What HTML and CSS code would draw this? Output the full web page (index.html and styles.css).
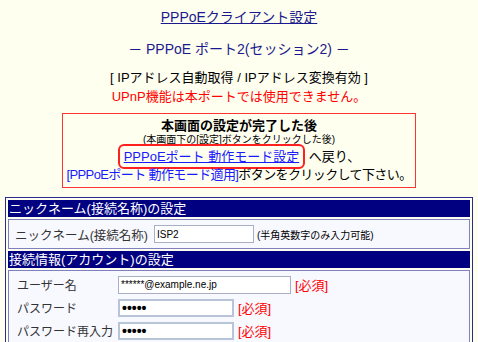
FILE: index.html
```html
<!DOCTYPE html>
<html lang="ja">
<head>
  <meta charset="UTF-8" />
  <title>PPPoEクライアント設定</title>
  <link rel="stylesheet" href="styles.css">
</head>
<body>
  <div class="title"><a href="#">PPPoEクライアント設定</a></div>
  <div class="port">－ PPPoE ポート2(セッション2) －</div>
  <div class="mode">
    <div>[ IPアドレス自動取得 / IPアドレス変換有効 ]</div>
    <div class="warn">UPnP機能は本ポートでは使用できません。</div>
  </div>

  <div class="notice">
    <div class="notice-head">本画面の設定が完了した後</div>
    <div class="notice-sub">(本画面下の[設定]ボタンをクリックした後)</div>
    <div class="notice-link"><span class="mark"><a href="#">PPPoEポート 動作モード設定</a></span> へ戻り、</div>
    <div class="notice-last"><span class="blue">[PPPoEポート 動作モード適用]</span>ボタンをクリックして下さい。</div>
  </div>

  <table class="form">
    <tr><th>ニックネーム(接続名称)の設定</th></tr>
    <tr>
      <td>
        <div class="nick">
          <span class="nick-label">ニックネーム(接続名称)</span>
          <input type="text" class="in-nick" value="ISP2">
          <span class="hint">(半角英数字のみ入力可能)</span>
        </div>
      </td>
    </tr>
    <tr><th>接続情報(アカウント)の設定</th></tr>
    <tr>
      <td class="account">
        <div class="field">
          <span class="label">ユーザー名</span>
          <input type="text" class="in-user" value="******@example.ne.jp">
          <span class="req">[必須]</span>
        </div>
        <div class="field">
          <span class="label">パスワード</span>
          <input type="password" class="in-pass" value="*****">
          <span class="req">[必須]</span>
        </div>
        <div class="field">
          <span class="label">パスワード再入力</span>
          <input type="password" class="in-pass" value="*****">
          <span class="req">[必須]</span>
        </div>
      </td>
    </tr>
  </table>
</body>
</html>
```

FILE: styles.css
```css
body {
  font-family: "Liberation Sans", "Noto Sans CJK JP", sans-serif;
  font-size: 13px;
  background-color: #fffff0;
  color: #000;
  margin: 0 5px;
  padding: 0;
}
.title {
  text-align: center;
  font-size: 14px;
  padding-top: 6px;
  height: 25px;
}
.title a {
  color: #1a1a8c;
}
.port {
  text-align: center;
  font-size: 14px;
  color: #1a1a8c;
  margin-top: 7px;
  height: 24px;
}
.mode {
  text-align: center;
  margin-top: 6px;
  line-height: 19px;
}
.warn {
  color: #ff0000;
}
.notice {
  width: 352px;
  margin: 7px auto 0;
  border: 1px solid #ff3333;
  text-align: center;
  padding: 4px 0 5px;
  white-space: nowrap;
}
.notice-head {
  font-weight: bold;
  line-height: 16px;
}
.notice-sub {
  font-size: 10px;
  line-height: 12px;
}
.notice-link {
  line-height: 22px;
}
.mark {
  display: inline-block;
  border: 2px solid #ff2020;
  border-radius: 6px;
  padding: 0 4px;
  line-height: 21px;
  margin: -2px 0 -1px;
}
.mark a {
  color: #1a1aff;
}
.notice-last {
  line-height: 14px;
  letter-spacing: -0.6px;
}
.blue {
  color: #1a1aff;
}
.form {
  width: 100%;
  margin-top: 9px;
  border: 1px solid #2a2a90;
  border-spacing: 2px;
  padding: 0;
}
.form th {
  background-color: #000080;
  color: #fff;
  font-weight: normal;
  font-size: 13px;
  text-align: left;
  padding: 0 1px;
  height: 17px;
  line-height: 17px;
}
.form td {
  background-color: #f8f8ff;
  border: 1px solid #8080c0;
  padding: 0;
}
.nick {
  display: flex;
  align-items: center;
  height: 28px;
  padding-left: 6px;
}
.nick-label {
  width: 139px;
  font-size: 12.5px;
  color: #333;
}
input {
  font-family: "Liberation Sans", sans-serif;
  font-size: 10px;
  border: 1px solid #a8b0c8;
  background-color: #fff;
  padding: 0 2px;
  height: 18px;
  box-sizing: border-box;
  margin: 0;
}
.in-nick {
  width: 100px;
}
.hint {
  font-size: 10px;
  margin-left: 3px;
}
.account {
  padding: 2px 0 2px 8px !important;
}
.field {
  display: flex;
  align-items: center;
  height: 23px;
  gap: 4px;
}
.label {
  width: 97px;
  flex-shrink: 0;
  white-space: nowrap;
  font-size: 12px;
  color: #333;
}
.in-user {
  width: 173px;
}
.in-pass {
  width: 116px;
  border: 2px solid #b8c4d8;
  font-size: 14px;
  font-weight: bold;
}
.req {
  color: #ff0000;
}
```
